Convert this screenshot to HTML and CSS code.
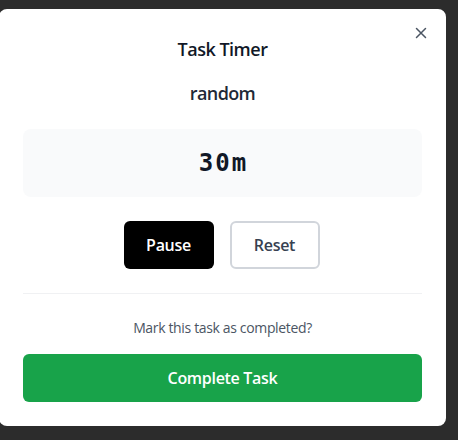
FILE: index.html
```html
<!DOCTYPE html>
<html lang="en">
<head>
<meta charset="utf-8">
<title>Task Timer</title>
<link rel="stylesheet" href="styles.css">
</head>
<body>
<div class="backdrop">
  <div class="modal">
    <button class="close" aria-label="Close">
      <svg width="20" height="20" viewBox="0 0 20 20" fill="none" stroke="currentColor" stroke-width="1.5" stroke-linecap="round">
        <path d="M5.5 5.5 14.5 14.5M14.5 5.5 5.5 14.5"/>
      </svg>
    </button>
    <h2 class="title">Task Timer</h2>
    <p class="task-name">random</p>
    <div class="timer-box"><span class="timer">30m</span></div>
    <div class="controls">
      <button class="btn btn-dark">Pause</button>
      <button class="btn btn-outline">Reset</button>
    </div>
    <div class="footer">
      <p class="prompt">Mark this task as completed?</p>
      <button class="btn-complete">Complete Task</button>
    </div>
  </div>
</div>
</body>
</html>
```

FILE: styles.css
```css
* { box-sizing: border-box; }
html, body { margin: 0; padding: 0; }
body {
  background: #2c2c2c;
  font-family: "Open Sans", "Noto Sans", sans-serif;
  width: 458px;
  height: 440px;
  overflow: hidden;
}
.backdrop {
  padding-top: 9px;
}
.modal {
  position: relative;
  margin-left: -1px;
  width: 447px;
  background: #ffffff;
  border-radius: 8px;
  padding: 26px 24px 24px;
  text-align: center;
}
.close {
  position: absolute;
  top: 14px;
  right: 15px;
  width: 20px;
  height: 20px;
  padding: 0;
  border: 0;
  background: none;
  color: #4b5563;
  display: flex;
}
.title {
  margin: 0;
  font-size: 18px;
  line-height: 28px;
  font-weight: 600;
  letter-spacing: -0.5px;
  color: #111827;
}
.task-name {
  margin: 16px 0 0;
  font-size: 18px;
  line-height: 28px;
  font-weight: 600;
  letter-spacing: -0.6px;
  color: #1f2937;
}
.timer-box {
  margin-top: 22px;
  background: #f9fafb;
  border-radius: 8px;
  padding: 16px;
}
.timer {
  display: block;
  font-family: "DejaVu Sans Mono", monospace;
  font-size: 24px;
  line-height: 36px;
  font-weight: 700;
  letter-spacing: 2px;
  padding-left: 2px;
  color: #111827;
}
.controls {
  margin-top: 24px;
  display: flex;
  justify-content: center;
  gap: 16px;
  padding-right: 2px;
}
.btn {
  width: 90px;
  height: 48px;
  border-radius: 6px;
  font-family: inherit;
  font-size: 16px;
  font-weight: 600;
  letter-spacing: -0.3px;
}
.btn-dark {
  background: #000;
  color: #fff;
  border: 0;
}
.btn-outline {
  background: #fff;
  color: #374151;
  border: 2px solid #d1d5db;
}
.footer {
  margin-top: 24px;
  border-top: 1px solid #f0f1f3;
  padding-top: 24px;
}
.prompt {
  margin: 0;
  font-size: 14px;
  line-height: 20px;
  letter-spacing: -0.35px;
  color: #4b5563;
}
.btn-complete {
  margin-top: 16px;
  width: 100%;
  height: 48px;
  border: 0;
  border-radius: 6px;
  background: #18a34a;
  color: #fff;
  font-family: inherit;
  font-size: 16px;
  font-weight: 600;
  letter-spacing: -0.3px;
}
```
